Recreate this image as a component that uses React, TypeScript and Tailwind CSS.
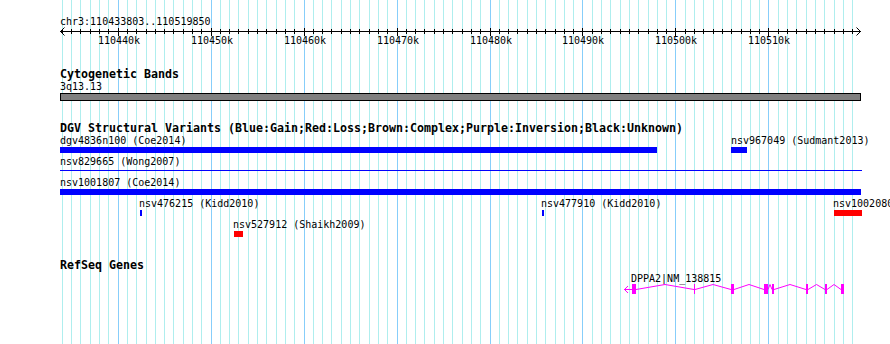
import React from "react";

const START = 110433803;
const END = 110519850;
const BP_PER_PX = (END - START) / 800;
const px = (bp: number) => Math.round(60 + (bp - START) / BP_PER_PX);

const gridLines = Array.from({ length: 86 }, (_, i) => {
  const k = 110434 + i;
  return { x: px(k * 1000), major: k % 10 === 0, k };
});

const majorLabels = gridLines.filter((g) => g.major);

type Variant = { label: string; lx: number; x: number; w: number; row: number; color: string; thin?: boolean };

const variants: Variant[] = [
  { label: "dgv4836n100 (Coe2014)", lx: 60, x: 60, w: 597, row: 0, color: "#0000ff" },
  { label: "nsv967049 (Sudmant2013)", lx: 731, x: 731, w: 16, row: 0, color: "#0000ff" },
  { label: "nsv829665 (Wong2007)", lx: 60, x: 60, w: 802, row: 1, color: "#0000ff", thin: true },
  { label: "nsv1001807 (Coe2014)", lx: 60, x: 60, w: 801, row: 2, color: "#0000ff" },
  { label: "nsv476215 (Kidd2010)", lx: 139, x: 140, w: 2, row: 3, color: "#0000ff" },
  { label: "nsv477910 (Kidd2010)", lx: 541, x: 542, w: 2, row: 3, color: "#0000ff" },
  { label: "nsv1002080 (Coe2014)", lx: 833, x: 834, w: 28, row: 3, color: "#ff0000" },
  { label: "nsv527912 (Shaikh2009)", lx: 233, x: 234, w: 9, row: 4, color: "#ff0000" },
];

// exon [start, width] in image px
const exons: [number, number][] = [
  [632, 4], [694, 1], [731, 3], [764, 4], [772, 2], [806, 2], [825, 2], [841, 3],
];

function Grid() {
  return (
    <svg className="absolute inset-0" width={890} height={344} shapeRendering="crispEdges">
      {gridLines.map((g) => (
        <line key={g.k} x1={g.x + 0.5} x2={g.x + 0.5} y1={0} y2={344} stroke={g.major ? "#87cefa" : "#afeeee"} strokeWidth={1} />
      ))}
    </svg>
  );
}

function Ruler() {
  return (
    <div className="relative h-[67px]">
      <span className="absolute left-[60px] top-[15px]">chr3:110433803..110519850</span>
      <svg className="absolute left-0 top-0" width={890} height={47} shapeRendering="crispEdges">
        <line x1={60} x2={861} y1={31.5} y2={31.5} stroke="#000" />
        <path d="M64.5 27.5 L60.5 31.5 L64.5 35.5" fill="none" stroke="#000" shapeRendering="auto" />
        <path d="M856.5 27.5 L860.5 31.5 L856.5 35.5" fill="none" stroke="#000" shapeRendering="auto" />
        {gridLines.map((g) => (
          <line key={g.k} x1={g.x + 0.5} x2={g.x + 0.5} y1={g.major ? 28 : 29} y2={g.major ? 36 : 34} stroke="#000" />
        ))}
      </svg>
      {majorLabels.map((g) => (
        <span key={g.k} className="absolute top-[34px] -translate-x-1/2" style={{ left: g.x + 1 }}>
          {g.k}k
        </span>
      ))}
    </div>
  );
}

function TrackTitle({ children }: { children: React.ReactNode }) {
  return <div className="relative top-px pl-[60px] text-[11.63px] font-bold leading-[13px]">{children}</div>;
}

function CytoBands() {
  return (
    <div className="h-[54px]">
      <TrackTitle>Cytogenetic Bands</TrackTitle>
      <div className="pl-[60px]">3q13.13</div>
      <div className="ml-[60px] h-[8px] w-[801px] border border-black bg-[#808080]" />
    </div>
  );
}

function Variants() {
  return (
    <div className="h-[137px]">
      <TrackTitle>DGV Structural Variants (Blue:Gain;Red:Loss;Brown:Complex;Purple:Inversion;Black:Unknown)</TrackTitle>
      <div className="relative h-[124px]">
        {variants.map((v) => (
          <React.Fragment key={v.label}>
            <span className="absolute whitespace-nowrap" style={{ left: v.lx, top: v.row * 21 }}>
              {v.label}
            </span>
            <div
              className="absolute"
              style={{
                left: v.x,
                width: v.w,
                top: v.row * 21 + (v.thin ? 15 : 13),
                height: v.thin ? 1 : 6,
                background: v.color,
              }}
            />
          </React.Fragment>
        ))}
      </div>
    </div>
  );
}

function Genes() {
  const introns = exons.slice(0, -1).map(([s, w], i) => {
    const a = s + w;
    const b = exons[i + 1][0];
    const m = (a + b) / 2;
    return `M${a} 5.5 L${m} 0.5 L${b} 5.5`;
  });
  return (
    <div className="h-[86px]">
      <TrackTitle>RefSeq Genes</TrackTitle>
      <div className="relative h-[73px]">
        <span className="absolute left-[631px] top-px">DPPA2|NM_138815</span>
        <svg className="absolute left-0 top-[13px]" width={890} height={12}>
          <line x1={624} x2={632} y1={5.5} y2={5.5} stroke="#ff00ff" />
          <path d="M628 2 L624.5 5.5 L628 9" fill="none" stroke="#ff00ff" />
          {introns.map((d, i) => (
            <path key={i} d={d} fill="none" stroke="#ff00ff" strokeWidth={1} />
          ))}
          {exons.map(([s, w]) => (
            <rect key={s} x={s} y={0} width={w} height={10} fill="#ff00ff" shapeRendering="crispEdges" />
          ))}
        </svg>
      </div>
    </div>
  );
}

export default function App() {
  return (
    <div className="relative h-[344px] w-[890px] overflow-hidden bg-white font-['DejaVu_Sans_Mono',monospace] text-[10px] leading-[13px] text-black">
      <Grid />
      <div className="relative">
        <Ruler />
        <CytoBands />
        <Variants />
        <Genes />
      </div>
    </div>
  );
}
